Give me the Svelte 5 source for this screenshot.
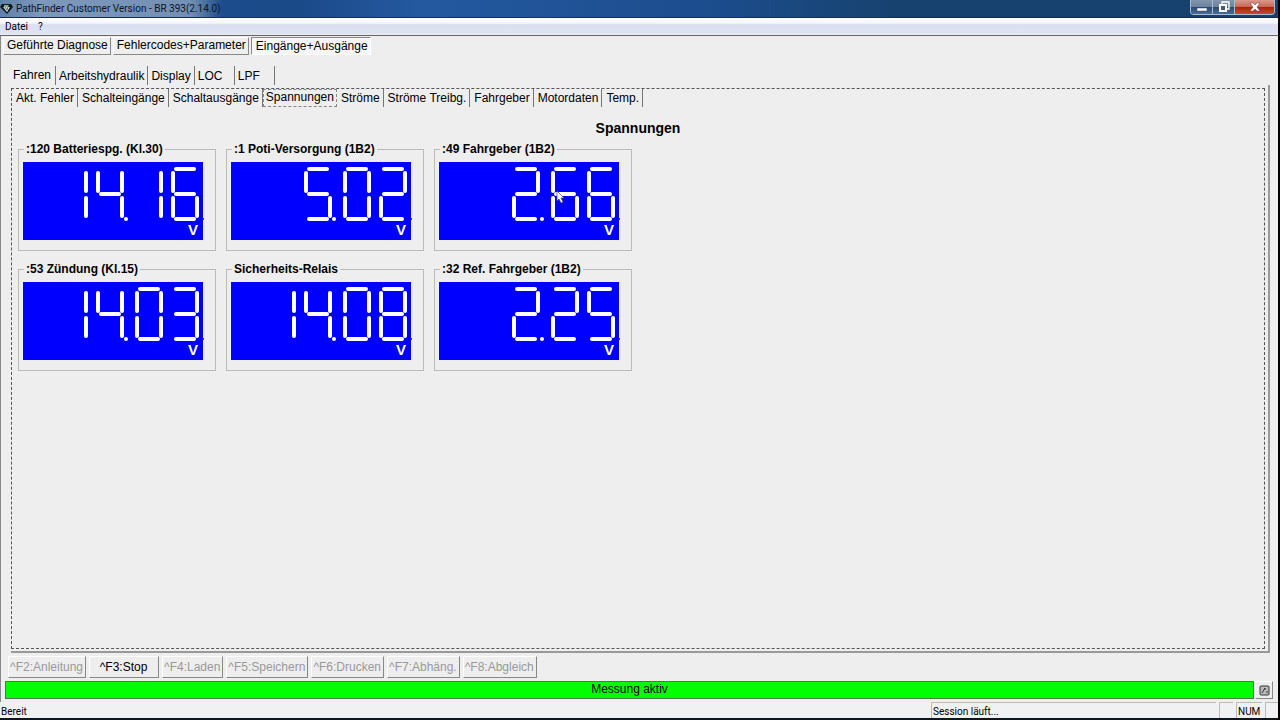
<script lang="ts">
  type Reading = { label: string; value: string; unit: string };

  const mainTabs = ['Geführte Diagnose', 'Fehlercodes+Parameter', 'Eingänge+Ausgänge'];
  const groupTabs = ['Fahren', 'Arbeitshydraulik', 'Display', 'LOC', 'LPF'];
  const pageTabs = [
    'Akt. Fehler',
    'Schalteingänge',
    'Schaltausgänge',
    'Spannungen',
    'Ströme',
    'Ströme Treibg.',
    'Fahrgeber',
    'Motordaten',
    'Temp.'
  ];

  const readings: Reading[] = [
    { label: ':120 Batteriespg. (Kl.30)', value: '14.16', unit: 'V' },
    { label: ':1 Poti-Versorgung (1B2)', value: '5.02', unit: 'V' },
    { label: ':49 Fahrgeber (1B2)', value: '2.66', unit: 'V' },
    { label: ':53 Zündung (Kl.15)', value: '14.03', unit: 'V' },
    { label: 'Sicherheits-Relais', value: '14.08', unit: 'V' },
    { label: ':32 Ref. Fahrgeber (1B2)', value: '2.25', unit: 'V' }
  ];

  const functionKeys = [
    { label: '^F2:Anleitung', enabled: false },
    { label: '^F3:Stop', enabled: true },
    { label: '^F4:Laden', enabled: false },
    { label: '^F5:Speichern', enabled: false },
    { label: '^F6:Drucken', enabled: false },
    { label: '^F7:Abhäng.', enabled: false },
    { label: '^F8:Abgleich', enabled: false }
  ];

  let mainTab = $state('Eingänge+Ausgänge');
  let groupTab = $state('Fahren');
  let pageTab = $state('Spannungen');

  // x1, y1, x2, y2 of each segment inside one digit cell
  const segments: Record<string, number[]> = {
    a: [3, 7, 21, 7],
    b: [24, 11, 24, 29],
    c: [24, 36, 24, 54],
    d: [3, 57, 21, 57],
    e: [0, 36, 0, 54],
    f: [0, 11, 0, 29],
    g: [3, 32, 21, 32]
  };

  const lit: Record<string, string> = {
    '0': 'abcdef',
    '1': 'bc',
    '2': 'abged',
    '3': 'abgcd',
    '4': 'fgbc',
    '5': 'afgcd',
    '6': 'afgedc',
    '7': 'abc',
    '8': 'abcdefg',
    '9': 'abcdfg'
  };

  // The last digit sits at the right edge; the decimal point widens the gap a little
  function layoutDigits(value: string) {
    const cells: { char: string; x: number }[] = [];
    let x = 150;
    for (const char of value.split('').reverse()) {
      if (char === '.') {
        x -= 3;
        cells.push({ char, x: x + 28 });
      } else {
        cells.push({ char, x });
        x -= 36;
      }
    }
    return cells;
  }
</script>

{#snippet tabs(items: string[], active: string, kind: string, select: (t: string) => void)}
  <div class="tabs {kind}" role="tablist">
    {#each items as item}
      <button
        role="tab"
        class:active={item === active}
        aria-selected={item === active}
        onclick={() => select(item)}
      >{item}</button>
    {/each}
  </div>
{/snippet}

<div class="window">
  <header class="titlebar">
    <svg class="app-icon" width="13" height="12" viewBox="0 0 13 12">
      <path d="M2 1h9l2 3-6 7-7-7z" fill="#10181c" />
      <path d="M4 2h5l-1 2H4z" fill="#7fae9a" />
      <path d="M3 4h7L7 9z" fill="#dce8ee" />
      <path d="M5 4l2 3 1-3" fill="none" stroke="#10181c" stroke-width="0.6" />
    </svg>
    <h1>PathFinder Customer Version - BR 393(2.14.0)</h1>
    <div class="window-buttons">
      <button aria-label="Minimieren">
        <svg width="12" height="12" viewBox="0 0 12 12">
          <rect x="1" y="7" width="10" height="3" fill="#fff" stroke="#3a4a60" stroke-width="0.5" />
        </svg>
      </button>
      <button aria-label="Verkleinern">
        <svg width="12" height="12" viewBox="0 0 12 12">
          <path d="M4 3V1h7v7H9" fill="none" stroke="#fff" stroke-width="1.3" />
          <rect x="2" y="4" width="6" height="6" fill="#40597c" stroke="#fff" stroke-width="2" />
        </svg>
      </button>
      <button class="close" aria-label="Schließen">
        <svg width="12" height="12" viewBox="0 0 12 12">
          <path d="M1 2h3l2 2 2-2h3L8 6l3 4H8L6 8l-2 2H1l3-4z" fill="#fff" stroke="#7a3028" stroke-width="0.5" />
        </svg>
      </button>
    </div>
  </header>

  <nav class="menu">
    <button>Datei</button>
    <button>?</button>
  </nav>

  <main>
    {@render tabs(mainTabs, mainTab, 'main-tabs', (t) => (mainTab = t))}

    <div class="group">
      {@render tabs(groupTabs, groupTab, 'group-tabs', (t) => (groupTab = t))}

      <div class="frame">
        <section class="page">
          {@render tabs(pageTabs, pageTab, 'page-tabs', (t) => (pageTab = t))}

          <h2>{pageTab}</h2>

          <div class="readings">
            {#each readings as reading, i}
              <fieldset>
                <legend>{reading.label}</legend>
                <div class="display">
                  <svg width="180" height="60" viewBox="0 0 180 60" role="img" aria-label={reading.value}>
                    {#each layoutDigits(reading.value) as cell}
                      {#if cell.char === '.'}
                        <circle cx={cell.x} cy="57" r="2" fill="#fff" />
                      {:else}
                        {#each lit[cell.char].split('') as name}
                          <line
                            x1={cell.x + segments[name][0]}
                            y1={segments[name][1]}
                            x2={cell.x + segments[name][2]}
                            y2={segments[name][3]}
                          />
                        {/each}
                      {/if}
                    {/each}
                    <circle cx="180" cy="57" r="1" fill="#00f" />
                  </svg>
                  <span class="unit">{reading.unit}</span>
                  {#if i === 2}
                    <svg class="pointer" width="9" height="14" viewBox="0 0 9 14">
                      <path d="M1 1v10l2-2 2 4 2-1-2-4h3z" fill="#fff" stroke="#446" stroke-width="0.7" />
                    </svg>
                  {/if}
                </div>
              </fieldset>
            {/each}
          </div>
        </section>
      </div>
    </div>

    <div class="function-keys">
      {#each functionKeys as key}
        <button disabled={!key.enabled}>{key.label}</button>
      {/each}
    </div>

    <div class="progress">
      <output>Messung aktiv</output>
      <button aria-label="Meldungen">
        <svg width="11" height="11" viewBox="0 0 11 11">
          <rect x="1" y="1" width="9" height="9" rx="1" fill="#bbb" stroke="#333" />
          <path d="M3 8l3-5M6 3v2M8 6v2" fill="none" stroke="#333" />
        </svg>
      </button>
    </div>
  </main>

  <footer>
    <span class="ready">Bereit</span>
    <span class="cell session">Session läuft...</span>
    <span class="cell blank"></span>
    <span class="cell num">NUM</span>
    <span class="cell grip"></span>
  </footer>
</div>

<style>
  :global(body) {
    margin: 0;
    background: #000;
  }

  .window {
    box-sizing: border-box;
    display: flex;
    flex-direction: column;
    height: 100vh;
    margin-right: 2px;
    border-bottom: 2px solid #10151c;
    background: #eee;
    color: #000;
    font-family: 'Liberation Sans', Arial, sans-serif;
    font-size: 12px;
  }

  button {
    margin: 0;
    padding: 0;
    border: 0;
    background: none;
    color: inherit;
    font: inherit;
    white-space: nowrap;
  }

  svg {
    display: block;
  }

  .titlebar {
    box-sizing: border-box;
    display: flex;
    align-items: center;
    height: 18px;
    border-bottom: 1px solid #1a2c48;
    background: linear-gradient(90deg, #5f80aa 0, #7d98ba 40px, #7390b5 190px, #1d4c8c 222px, #1b4a89 300px, #2459a0 420px, #1c4d8e 700px, #17426f 900px, #17426f 100%);
  }

  .app-icon {
    margin-right: 3px;
  }

  h1 {
    flex: 1;
    margin: 0;
    padding-top: 1px;
    color: #0c1420;
    font-family: Roboto, sans-serif;
    font-size: 10px;
    font-weight: 400;
    line-height: 16px;
  }

  .window-buttons {
    display: flex;
    align-self: flex-start;
    margin-right: 3px;
    border: 1px solid #a9bccf;
    border-top: 0;
    border-radius: 0 0 4px 4px;
    overflow: hidden;
  }

  .window-buttons button {
    display: flex;
    align-items: center;
    justify-content: center;
    width: 22px;
    height: 14px;
    border-right: 1px solid #a9bccf;
    background: linear-gradient(#8295ac, #6c819d 50%, #284a70 50%, #4a6d94);
  }

  .window-buttons .close {
    width: 39px;
    border-right: 0;
    background: linear-gradient(#d99a8c, #c96552 50%, #a82010 50%, #cc4a30);
  }

  .menu {
    display: flex;
    gap: 10px;
    height: 17px;
    padding: 0 5px;
    border-bottom: 1px solid #666;
    background: linear-gradient(#fff 0, #f4f6fb 30%, #d9dff0 40%, #dfe4f3 90%, #eee 100%);
    font-family: Roboto, sans-serif;
    font-size: 10px;
  }

  main {
    display: flex;
    flex: 1;
    flex-direction: column;
    min-height: 0;
    padding: 1px 5px 3px 2px;
    border-left: 1px solid #888;
  }

  .tabs {
    display: flex;
  }

  .main-tabs {
    gap: 2px;
  }

  .main-tabs button {
    height: 18px;
    padding: 0 2px 2px 3px;
    border: 1px solid;
    border-color: #fff #888 #888 #fff;
  }

  .main-tabs .active {
    padding: 0 2px 0 4px;
    border-color: #888 #fff #fff #888;
    background: #f6f6f6;
  }

  .group {
    display: flex;
    flex: 1;
    flex-direction: column;
    margin: 11px 3px 0 8px;
  }

  .group-tabs button {
    min-width: 40px;
    height: 19px;
    padding: 0 3px;
    border-right: 1px solid #777;
    text-align: left;
  }

  .group-tabs .active {
    padding: 0 4px 2px 2px;
  }

  .frame {
    display: flex;
    flex: 1;
    padding: 3px 3px 2px 0;
    border-right: 2px solid #999;
    border-bottom: 2px solid #999;
  }

  .page {
    flex: 1;
    border: 1px dashed #555;
  }

  .page-tabs button {
    height: 18px;
    padding: 0 3px 0 4px;
    border-right: 1px solid #777;
  }

  .page-tabs .active {
    padding: 0 2px 2px;
    border: 1px dashed #888;
  }

  h2 {
    margin: 13px 0 5px;
    font-size: 14px;
    line-height: 16px;
    text-align: center;
  }

  .readings {
    display: grid;
    grid-template-columns: repeat(auto-fill, 198px);
    gap: 10px;
    max-width: 640px;
    padding-left: 6px;
  }

  fieldset {
    min-width: 0;
    margin: 0;
    padding: 5px 4px 10px;
    border: 1px solid #bbb;
  }

  legend {
    margin-left: 1px;
    padding: 0 2px;
    font-weight: 700;
    line-height: 16px;
  }

  .display {
    position: relative;
    width: 180px;
    background: #00f;
    color: #fff;
  }

  .display svg {
    overflow: visible;
  }

  line {
    stroke: #fff;
    stroke-width: 4;
    stroke-linecap: round;
  }

  .unit {
    display: block;
    padding: 0 5px 2px 0;
    font-size: 15px;
    font-weight: 700;
    line-height: 16px;
    text-align: right;
  }

  .pointer {
    position: absolute;
    top: 28px;
    left: 117px;
  }

  .function-keys {
    display: flex;
    gap: 3px;
    margin: 3px 0 3px 5px;
  }

  .function-keys button {
    height: 22px;
    padding: 0 2px 1px 1px;
    border: 1px solid;
    border-color: #fff #888 #888 #fff;
  }

  .function-keys button:enabled {
    min-width: 70px;
  }

  .function-keys button:disabled {
    color: #999;
  }

  .progress {
    display: flex;
    gap: 1px;
    margin-left: 2px;
  }

  output {
    flex: 1;
    padding-bottom: 2px;
    border: 1px solid #4a7a4a;
    background: #0f0;
    line-height: 14px;
    text-align: center;
  }

  .progress button {
    display: flex;
    align-items: center;
    justify-content: center;
    width: 18px;
    border: 1px solid;
    border-color: #fff #888 #888 #fff;
  }

  footer {
    display: flex;
    gap: 3px;
    height: 16px;
    background: #f0f1f3;
    font-family: Roboto, sans-serif;
    font-size: 10px;
    line-height: 18px;
  }

  .ready {
    flex: 1;
    padding: 1px 0 0 1px;
  }

  .cell {
    box-sizing: border-box;
    border-top: 1px solid #bbb;
    border-left: 1px solid #bbb;
    padding-left: 1px;
  }

  .session {
    width: 285px;
  }

  .blank {
    width: 14px;
  }

  .num {
    width: 26px;
  }

  .grip {
    width: 13px;
  }
</style>
